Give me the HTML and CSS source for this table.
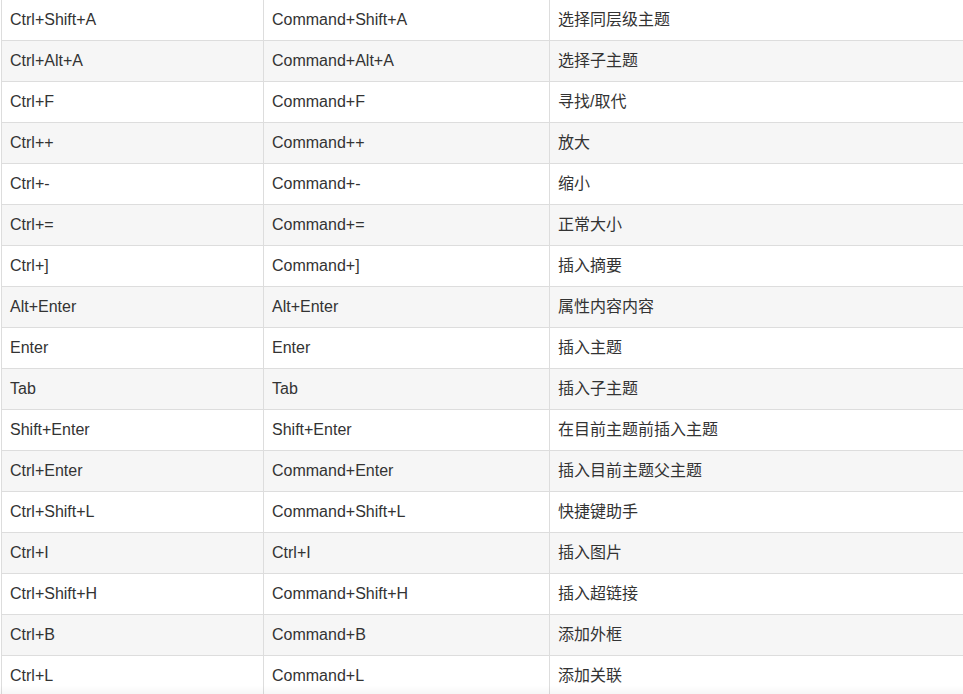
FILE: index.html
```html
<!DOCTYPE html>
<html lang="zh-CN">
<head>
<meta charset="utf-8">
<title>快捷键</title>
<link rel="stylesheet" href="styles.css">
</head>
<body>
<div class="wrap">
<table class="keys">
<colgroup><col class="c1"><col class="c2"><col class="c3"></colgroup>
<tbody>
<tr><td>Ctrl+Shift+A</td><td>Command+Shift+A</td><td>选择同层级主题</td></tr>
<tr><td>Ctrl+Alt+A</td><td>Command+Alt+A</td><td>选择子主题</td></tr>
<tr><td>Ctrl+F</td><td>Command+F</td><td>寻找/取代</td></tr>
<tr><td>Ctrl++</td><td>Command++</td><td>放大</td></tr>
<tr><td>Ctrl+-</td><td>Command+-</td><td>缩小</td></tr>
<tr><td>Ctrl+=</td><td>Command+=</td><td>正常大小</td></tr>
<tr><td>Ctrl+]</td><td>Command+]</td><td>插入摘要</td></tr>
<tr><td>Alt+Enter</td><td>Alt+Enter</td><td>属性内容内容</td></tr>
<tr><td>Enter</td><td>Enter</td><td>插入主题</td></tr>
<tr><td>Tab</td><td>Tab</td><td>插入子主题</td></tr>
<tr><td>Shift+Enter</td><td>Shift+Enter</td><td>在目前主题前插入主题</td></tr>
<tr><td>Ctrl+Enter</td><td>Command+Enter</td><td>插入目前主题父主题</td></tr>
<tr><td>Ctrl+Shift+L</td><td>Command+Shift+L</td><td>快捷键助手</td></tr>
<tr><td>Ctrl+I</td><td>Ctrl+I</td><td>插入图片</td></tr>
<tr><td>Ctrl+Shift+H</td><td>Command+Shift+H</td><td>插入超链接</td></tr>
<tr><td>Ctrl+B</td><td>Command+B</td><td>添加外框</td></tr>
<tr><td>Ctrl+L</td><td>Command+L</td><td>添加关联</td></tr>
</tbody>
</table>
</div>
<div class="fade"></div>
</body>
</html>
```
FILE: styles.css
```css
html, body {
  margin: 0;
  padding: 0;
  background: #fff;
}
.wrap {
  padding-left: 1px;
}
.keys {
  border-collapse: collapse;
  table-layout: fixed;
  width: 962px;
  font-family: Arial, "Liberation Sans", "Noto Sans CJK SC", sans-serif;
  font-size: 16px;
  color: #333;
}
.c1 { width: 262px; }
.c2 { width: 286px; }
.c3 { width: 414px; }
.keys td {
  border: 1px solid #ddd;
  padding: 8px;
  line-height: 24px;
  height: 24px;
  white-space: nowrap;
  text-align: left;
  vertical-align: middle;
}
.keys tr:first-child td {
  border-top: 0;
}
.keys tr:nth-child(even) td {
  background: #f6f6f6;
}
.fade {
  position: fixed;
  left: 0;
  right: 0;
  bottom: 0;
  height: 8px;
  background: linear-gradient(to bottom, rgba(0,0,0,0), rgba(0,0,0,0.035));
  pointer-events: none;
}
```
